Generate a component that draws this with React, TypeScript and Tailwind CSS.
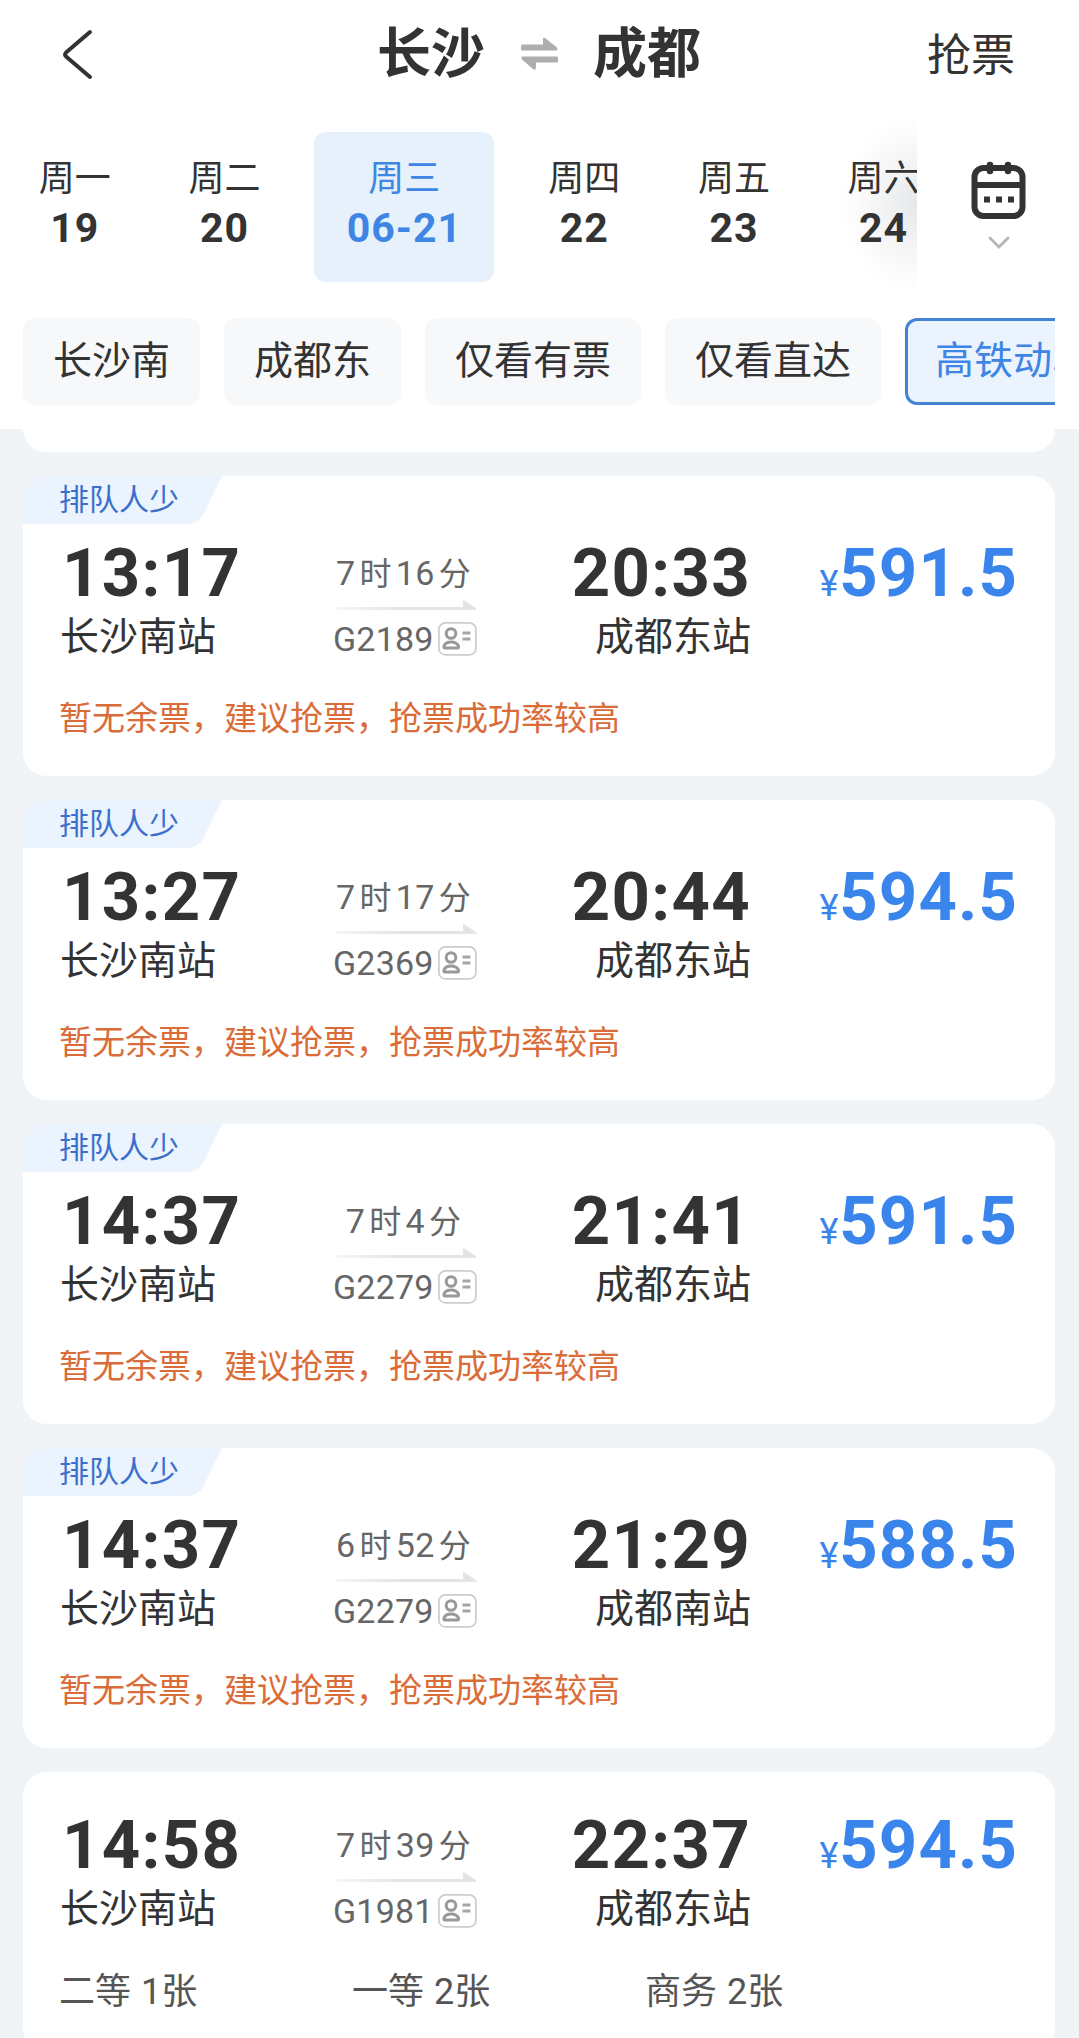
import React from 'react';

const CJK = "font-['Noto_Sans_CJK_SC',sans-serif]";
const NUM = "font-['Roboto','Noto_Sans_CJK_SC',sans-serif]";

type Train = {
  depart: string;
  from: string;
  duration: string;
  code: string;
  arrive: string;
  to: string;
  price: string;
  tag?: string;
  note?: string;
  seats?: [string, string][];
};

const NOTE = '暂无余票，建议抢票，抢票成功率较高';

const trains: Train[] = [
  { depart: '13:17', from: '长沙南站', duration: '7时16分', code: 'G2189', arrive: '20:33', to: '成都东站', price: '591.5', tag: '排队人少', note: NOTE },
  { depart: '13:27', from: '长沙南站', duration: '7时17分', code: 'G2369', arrive: '20:44', to: '成都东站', price: '594.5', tag: '排队人少', note: NOTE },
  { depart: '14:37', from: '长沙南站', duration: '7时4分', code: 'G2279', arrive: '21:41', to: '成都东站', price: '591.5', tag: '排队人少', note: NOTE },
  { depart: '14:37', from: '长沙南站', duration: '6时52分', code: 'G2279', arrive: '21:29', to: '成都南站', price: '588.5', tag: '排队人少', note: NOTE },
  { depart: '14:58', from: '长沙南站', duration: '7时39分', code: 'G1981', arrive: '22:37', to: '成都东站', price: '594.5', seats: [['二等', '1张'], ['一等', '2张'], ['商务', '2张']] },
];

const days = [
  { week: '周一', date: '19' },
  { week: '周二', date: '20' },
  { week: '周三', date: '06-21', active: true },
  { week: '周四', date: '22' },
  { week: '周五', date: '23' },
  { week: '周六', date: '24' },
];

const filters = [
  { label: '长沙南' },
  { label: '成都东' },
  { label: '仅看有票' },
  { label: '仅看直达' },
  { label: '高铁动车', active: true },
];

function Header() {
  return (
    <header className="flex h-[108px] items-center pl-[60px] pr-[64px]">
      <svg width="36" height="52" viewBox="0 0 36 52" fill="none" stroke="#333" strokeWidth="4" strokeLinecap="round" strokeLinejoin="round">
        <path d="M30 4 L6 24.500 Q4.200 26.500 6 28.500 L30 49" />
      </svg>
      <div className="ml-[281px] flex w-[324px] items-center justify-between text-[54px] font-bold leading-[80px] text-[#333]">
        <span className="-mt-2">长沙</span>
        <svg width="37" height="34" viewBox="0 0 37 34" fill="#aeaeae">
          <path d="M1.500 7.500 H22 V2 Q22 0 24 1 L36 10.500 Q37 13.500 35.500 13.500 H1.500 Q0 13.500 0 12 V9 Q0 7.500 1.500 7.500Z" />
          <path d="M35.500 19.500 H1.500 Q-.5 19.500 1 22.500 L12.500 32.500 Q14.500 33.500 15 31 V25.500 H35.500 Q37 25.500 37 24 V21 Q37 19.500 35.500 19.500Z" />
        </svg>
        <span className="-mt-2">成都</span>
      </div>
      <span className="-mt-1 ml-auto text-[44px] leading-[60px] text-[#333]">抢票</span>
    </header>
  );
}

function DateBar() {
  return (
    <div className="flex h-[210px]">
      <div className="relative flex w-[917px] overflow-hidden">
        {days.map((d) => (
          <div
            key={d.week}
            className={
              d.active
                ? 'mx-[15px] mt-6 flex h-[150px] w-[180px] shrink-0 flex-col items-center rounded-xl bg-[#e7f1fc] pt-[21px] text-[#3f85e4]'
                : 'relative z-10 mt-6 flex h-[150px] w-[149.7px] shrink-0 flex-col items-center pt-[21px] text-[#333]'
            }
          >
            <span className="text-[36px] leading-[44px]">{d.week}</span>
            <span className={`${NUM} mt-2 text-[41px] font-bold leading-[46px] tracking-[1px]`}>{d.date}</span>
          </div>
        ))}
        <div className="absolute right-0 top-2 h-[176px] w-[76px] bg-[radial-gradient(76px_88px_at_100%_50%,#e6e7e9_0%,#f1f2f3_40%,#fafafa_75%,#ffffff_100%)]" />
      </div>
      <div className="flex flex-1 flex-col items-center pl-px pt-[53px]">
        <svg width="56" height="60" viewBox="0 0 56 60" fill="none" stroke="#333">
          <rect x="3.500" y="7" width="48" height="48" rx="9" strokeWidth="6" />
          <path d="M4 24 H51" strokeWidth="6" />
          <path d="M19 4 V10 M37 4 V10" strokeWidth="6.500" strokeLinecap="round" />
          <path d="M13 38.500 h6 M25 38.500 h6 M37 38.500 h6" strokeWidth="6" />
        </svg>
        <svg className="mt-[14px]" width="24" height="16" viewBox="0 0 24 16" fill="none" stroke="#b5b5b5" strokeWidth="2.800" strokeLinecap="round">
          <path d="M3 3 L12 12 L21 3" />
        </svg>
      </div>
    </div>
  );
}

function Filters() {
  return (
    <div className="ml-[23px] flex h-[111px] w-[1032px] gap-6 overflow-hidden">
      {filters.map((f) => (
        <div
          key={f.label}
          className={
            f.active
              ? 'flex h-[87px] shrink-0 items-center rounded-xl border-[3px] border-[#4383d4] bg-[#ebf3fe] px-[27px] pb-2 text-[39px] text-[#3f85e4]'
              : 'flex h-[87px] shrink-0 items-center rounded-xl bg-[#f7f8fa] px-[30px] pb-2 text-[39px] text-[#333]'
          }
        >
          {f.label}
        </div>
      ))}
    </div>
  );
}

function Tag({ label }: { label: string }) {
  return (
    <div className="absolute left-0 top-0 h-12 w-[200px]">
      <svg className="absolute inset-0" width="200" height="48" viewBox="0 0 200 48" fill="#eaf3fe">
        <path d="M0 0 H199 L181 37 Q175.500 48 165 48 H0Z" />
      </svg>
      <span className="relative ml-9 block text-[30px] leading-[42px] text-[#3a70cc]">{label}</span>
    </div>
  );
}

function Duration({ value }: { value: string }) {
  return (
    <div className={`${NUM} ml-px flex h-10 items-baseline justify-center text-[34px] leading-[40px] tracking-[0.300px] text-[#666]`}>
      {value.split(/([时分])/).filter(Boolean).map((part, i) =>
        /[时分]/.test(part) ? (
          <span key={i} className="mx-1 text-[32px]">{part}</span>
        ) : (
          <span key={i}>{part}</span>
        ),
      )}
    </div>
  );
}

function IdBadge() {
  return (
    <svg width="39" height="34" viewBox="0 0 39 34" fill="none">
      <rect x="0.900" y="0.900" width="37" height="32" rx="6.500" stroke="#ccc" strokeWidth="1.700" />
      <circle cx="13" cy="11.500" r="4.800" stroke="#999" strokeWidth="3" />
      <path d="M7 26 Q5.500 26 6 24 Q7.500 20 13 20 Q18.500 20 20.500 24 Q21 26 19.500 26 Z" stroke="#999" strokeWidth="3" strokeLinejoin="round" />
      <path d="M24.500 11 H32.500 M24.500 17 H32.500" stroke="#a6a6a6" strokeWidth="2.800" />
    </svg>
  );
}

function TrainCard({ t }: { t: Train }) {
  return (
    <article className={`relative w-[1032px] shrink-0 overflow-hidden rounded-[24px] bg-white pl-9 ${t.tag ? 'h-[300px] pt-[66px]' : 'h-[280px] pt-[42px]'}`}>
      {t.tag && <Tag label={t.tag} />}
      <div className="flex h-[115px] text-[#333]">
        <div className="w-[275px]">
          <div className={`${NUM} pl-[3px] pt-px text-[67px] font-bold leading-[60px] tracking-[1.300px]`}>{t.depart}</div>
          <div className="ml-px mt-[6px] text-[39px] leading-[48px]">{t.from}</div>
        </div>
        <div className="w-[142px] pt-[11px]">
          <Duration value={t.duration} />
          <svg className="ml-px mt-[6px] block" width="142" height="11" viewBox="0 0 142 11">
            <defs>
              <linearGradient id="fade" x1="0" x2="1">
                <stop offset="0" stopColor="#f6f6f6" />
                <stop offset="0.500" stopColor="#e4e4e4" />
              </linearGradient>
            </defs>
            <rect x="0" y="8" width="132" height="3" fill="url(#fade)" />
            <path d="M128 11 V0.500 L141 9 Q142 11 140 11Z" fill="#e4e4e4" />
          </svg>
          <div className="-ml-px -mr-px mt-3 flex items-center justify-between">
            <span className={`${NUM} text-[34px] leading-[34px] tracking-[0.200px] text-[#666]`}>{t.code}</span>
            <IdBadge />
          </div>
        </div>
        <div className="w-[275px] text-right">
          <div className={`${NUM} pt-px text-[67px] font-bold leading-[60px] tracking-[1.300px]`}>{t.arrive}</div>
          <div className="mt-[6px] text-[39px] leading-[48px]">{t.to}</div>
        </div>
        <div className={`${NUM} flex h-[61px] w-[267px] items-baseline justify-end pt-px leading-[60px] text-[#3a85ec]`}>
          <span className="mr-px text-[36px]">¥</span>
          <span className="text-[67px] font-bold tracking-[1.100px]">{t.price}</span>
        </div>
      </div>
      {t.note && <div className="mt-[35px] text-[33px] leading-[48px] text-[#d96c38]">{t.note}</div>}
      {t.seats && (
        <div className="mt-[35px] flex text-[36px] leading-[48px] text-[#555]">
          {t.seats.map(([cls, left]) => (
            <div key={cls} className="w-[293px]">
              {cls} <span className={`${NUM} ml-0.5`}>{left}</span>
            </div>
          ))}
        </div>
      )}
    </article>
  );
}

export default function App() {
  return (
    <div className={`${CJK} h-[2038px] w-[1079px] overflow-hidden bg-[#f0f4f7]`}>
      <div className="h-[429px] bg-white">
        <Header />
        <DateBar />
        <Filters />
      </div>
      <main className="flex flex-col gap-6 pl-[23px]">
        <div className="h-[23px] w-[1032px] shrink-0 rounded-b-[24px] bg-white" />
        {trains.map((t, i) => (
          <TrainCard key={i} t={t} />
        ))}
      </main>
    </div>
  );
}
